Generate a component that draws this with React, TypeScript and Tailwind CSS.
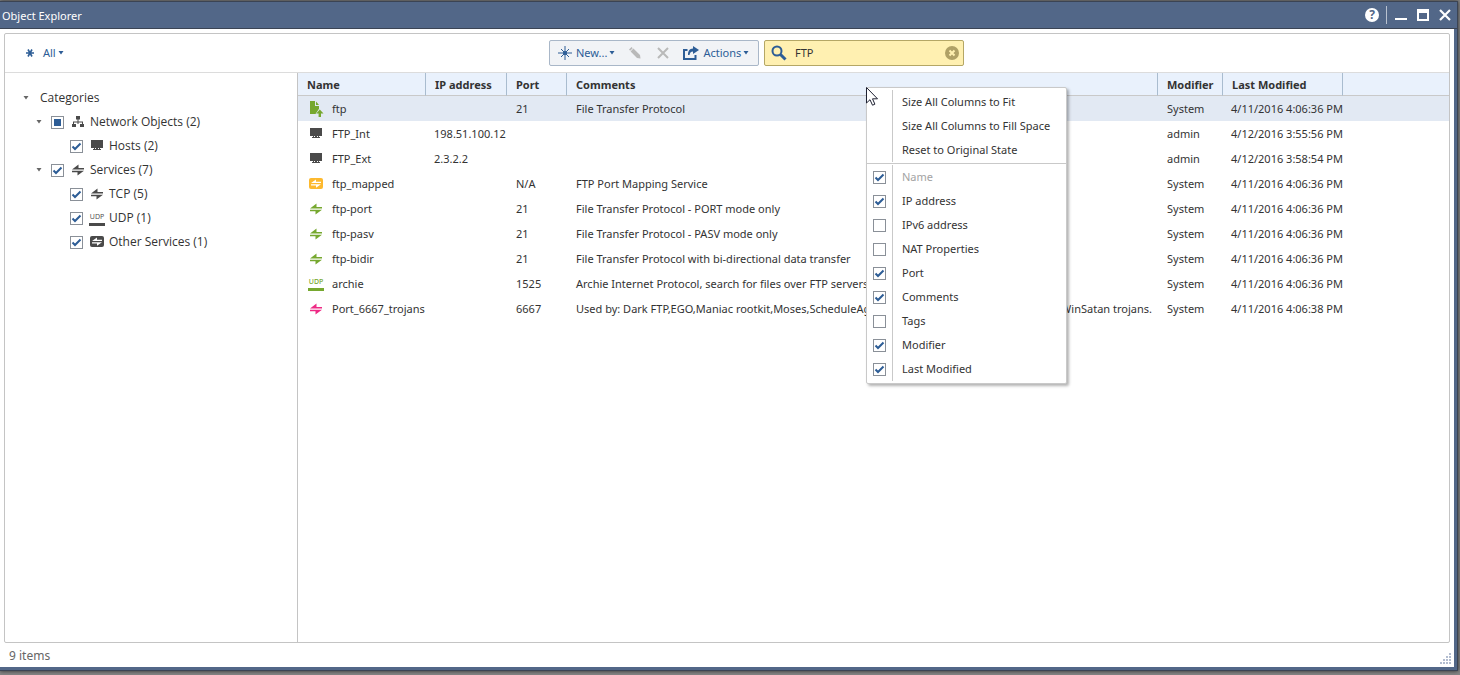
import type { ReactNode } from "react"

type IconProps = { className?: string }

const objects = [
  { icon: <FileUpIcon className="text-[#76a82f]" />, name: "ftp", ip: "", port: "21", comments: "File Transfer Protocol", modifier: "System", modified: "4/11/2016 4:06:36 PM", selected: true },
  { icon: <HostIcon className="text-[#4a4a4a]" />, name: "FTP_Int", ip: "198.51.100.12", port: "", comments: "", modifier: "admin", modified: "4/12/2016 3:55:56 PM" },
  { icon: <HostIcon className="text-[#4a4a4a]" />, name: "FTP_Ext", ip: "2.3.2.2", port: "", comments: "", modifier: "admin", modified: "4/12/2016 3:58:54 PM" },
  { icon: <OtherIcon className="text-[#fdb92e]" />, name: "ftp_mapped", ip: "", port: "N/A", comments: "FTP Port Mapping Service", modifier: "System", modified: "4/11/2016 4:06:36 PM" },
  { icon: <ArrowsIcon className="text-[#76a82f]" />, name: "ftp-port", ip: "", port: "21", comments: "File Transfer Protocol - PORT mode only", modifier: "System", modified: "4/11/2016 4:06:36 PM" },
  { icon: <ArrowsIcon className="text-[#76a82f]" />, name: "ftp-pasv", ip: "", port: "21", comments: "File Transfer Protocol - PASV mode only", modifier: "System", modified: "4/11/2016 4:06:36 PM" },
  { icon: <ArrowsIcon className="text-[#76a82f]" />, name: "ftp-bidir", ip: "", port: "21", comments: "File Transfer Protocol with bi-directional data transfer", modifier: "System", modified: "4/11/2016 4:06:36 PM" },
  { icon: <UdpIcon className="text-[#76a82f]" />, name: "archie", ip: "", port: "1525", comments: "Archie Internet Protocol, search for files over FTP servers", modifier: "System", modified: "4/11/2016 4:06:36 PM" },
  { icon: <ArrowsIcon className="text-[#ee2a85]" />, name: "Port_6667_trojans", ip: "", port: "6667", comments: "Used by: Dark FTP,EGO,Maniac rootkit,Moses,ScheduleAgent,SubSeven 2.1.4,The Thing,Trinity, WinSatan trojans.", modifier: "System", modified: "4/11/2016 4:06:38 PM" },
]

const tree = [
  { label: "Network Objects (2)", icon: <NetworkIcon />, state: "mixed", parent: true },
  { label: "Hosts (2)", icon: <HostIcon />, state: "on", parent: false },
  { label: "Services (7)", icon: <ArrowsIcon />, state: "on", parent: true },
  { label: "TCP (5)", icon: <ArrowsIcon />, state: "on", parent: false },
  { label: "UDP (1)", icon: <UdpIcon />, state: "on", parent: false },
  { label: "Other Services (1)", icon: <OtherIcon />, state: "on", parent: false },
]

const menuActions = ["Size All Columns to Fit", "Size All Columns to Fill Space", "Reset to Original State"]

const menuColumns = [
  { label: "Name", on: true, disabled: true },
  { label: "IP address", on: true },
  { label: "IPv6 address", on: false },
  { label: "NAT Properties", on: false },
  { label: "Port", on: true },
  { label: "Comments", on: true },
  { label: "Tags", on: false },
  { label: "Modifier", on: true },
  { label: "Last Modified", on: true },
]

function FileUpIcon({ className = "" }: IconProps) {
  return (
    <svg viewBox="0 0 16 16" className={`size-4 ${className}`} fill="currentColor">
      <path d="M2 0h5v5h4v8H2z" />
      <path d="M8 0.500L11 4H8z" />
      <path d="M11.500 7L16 12.500V16H9v-3H7.500z" fill="#e2e9f3" />
      <path d="M11.800 8.500L15.500 12.500h-2.500V16h-2.400v-3.500H8.200z" />
    </svg>
  )
}

function HostIcon({ className = "" }: IconProps) {
  return (
    <svg viewBox="0 0 16 16" className={`size-4 ${className}`} fill="currentColor">
      <path d="M2 2h12v8H2zM5 10h1v1h4v-1h1v1h1v1H4v-1h1zM7 10h2v1H7z" />
    </svg>
  )
}

function NetworkIcon({ className = "" }: IconProps) {
  return (
    <svg viewBox="0 0 16 16" className={`size-4 ${className}`} fill="currentColor">
      <path d="M6 2h4v3.500H8.500V7.500H13V10h1v3h-4v-3h2V8.500H8.500V10h-1V8.500H4V10h2v3H2v-3h1V7.500h4.500v-2H6z" />
    </svg>
  )
}

function ArrowsIcon({ className = "" }: IconProps) {
  return (
    <svg viewBox="0 0 16 16" className={`size-4 ${className}`} fill="currentColor">
      <path d="M2 7.500L8.500 2.500V6H14v1.500zM14 8.800L7.500 13.500V10.200H2V8.800z" />
    </svg>
  )
}

function OtherIcon({ className = "" }: IconProps) {
  return (
    <svg viewBox="0 0 16 16" className={`size-4 ${className}`} fill="currentColor">
      <rect x="1" y="2" width="14" height="11" rx="2" />
      <path fill="#fff" d="M3 7L8 3.500V5.700h5V7zM13 8.200L8 11.700V9.500H3V8.200z" />
    </svg>
  )
}

function UdpIcon({ className = "" }: IconProps) {
  return (
    <span className={`flex h-[15px] w-4 items-center justify-center border-b-[3px] border-current text-[7px] leading-[8px] font-medium ${className}`}>
      UDP
    </span>
  )
}

function Caret({ className = "" }: IconProps) {
  return (
    <svg viewBox="0 0 6 4" className={`h-1 w-1.5 ${className}`} fill="currentColor">
      <path d="M.5 0h5L3 3.500z" />
    </svg>
  )
}

function CheckBox({ state, label, disabled }: { state: string; label: string; disabled?: boolean }) {
  return (
    <span className="grid size-[13px] shrink-0">
      <input
        type="checkbox"
        aria-label={label}
        defaultChecked={state === "on"}
        disabled={disabled}
        className="peer col-start-1 row-start-1 size-[13px] appearance-none border border-[#8a9098] bg-white"
      />
      {state === "mixed" ? (
        <span className="pointer-events-none col-start-1 row-start-1 m-[3px] bg-[#2d5d96]" />
      ) : (
        <svg viewBox="0 0 13 13" className="pointer-events-none invisible col-start-1 row-start-1 size-[13px] peer-checked:visible">
          <path d="M2.500 6.500L5 9l5.500-5.500" fill="none" stroke="#2d5d96" strokeWidth="2" />
        </svg>
      )}
    </span>
  )
}

function TitleBar() {
  return (
    <header className="flex h-7 items-center border-t border-b border-[#3b4454] bg-[#526788] pr-1.5 pl-0.5 text-white">
      <h1 className="flex-1 pt-0.5 text-[11px] leading-4">Object Explorer</h1>
      <button aria-label="Help" className="flex size-4 items-center justify-center">
        <span className="flex size-3.5 items-center justify-center rounded-full bg-white text-[12px] leading-[14px] font-bold text-[#526788]">?</span>
      </button>
      <span className="ml-1.5 h-[18px] w-px bg-[#b9c2d0]" />
      <button aria-label="Minimize" className="ml-2">
        <svg viewBox="0 0 12 12" className="size-3" fill="currentColor"><path d="M0 9h12v2H0z" /></svg>
      </button>
      <button aria-label="Maximize" className="ml-2.5">
        <svg viewBox="0 0 12 12" className="size-3" fill="currentColor"><path fillRule="evenodd" d="M0 0h12v12H0zM2 4v6h8V4z" /></svg>
      </button>
      <button aria-label="Close" className="ml-2.5">
        <svg viewBox="0 0 12 12" className="size-3" stroke="currentColor" strokeWidth="2.200"><path d="M1 1l10 10M11 1L1 11" /></svg>
      </button>
    </header>
  )
}

function Toolbar() {
  return (
    <div className="flex h-[39px] items-center border-b border-[#dcdcdc] text-[11px] leading-4 text-[#2d5d96]">
      <div className="w-[544px] shrink-0 pl-5">
        <button className="flex items-center">
          <svg viewBox="0 0 10 10" className="size-2.5" stroke="currentColor" strokeWidth="1.600">
            <path d="M1 5h8M3 1.500l4 7M7 1.500l-4 7" />
          </svg>
          <span className="ml-2">All</span>
          <Caret className="ml-0.5" />
        </button>
      </div>
      <div className="flex h-[26px] w-[210px] shrink-0 items-center rounded-xs border border-[#a9b7c8] bg-[#f1f3f6] pl-2">
        <button className="flex items-center">
          <svg viewBox="0 0 14 14" className="size-3.5" stroke="currentColor">
            <path d="M0 7h14M7 0v14M3 3l8 8M11 3l-8 8" />
            <circle cx="7" cy="7" r="1.500" fill="currentColor" />
          </svg>
          <span className="ml-1">New...</span>
          <Caret className="ml-0.5" />
        </button>
        <button aria-label="Edit" disabled className="ml-3.5 text-[#b9b9b9]">
          <svg viewBox="0 0 12 12" className="size-3" fill="currentColor">
            <path d="M0 2.500L2.500 0l1.200 1.200L1.200 3.700zM1.600 4.400L4.400 1.600l6.600 6.400.5 3.500-3.500-.5z" />
          </svg>
        </button>
        <button aria-label="Delete" disabled className="ml-4 text-[#b9b9b9]">
          <svg viewBox="0 0 12 12" className="size-3" stroke="currentColor" strokeWidth="2"><path d="M1 1l10 10M11 1L1 11" /></svg>
        </button>
        <button className="ml-3.5 flex items-center">
          <svg viewBox="0 0 16 14" className="h-3.5 w-4">
            <path d="M4.500 4H1v9h11.500V9" fill="none" stroke="currentColor" strokeWidth="2" />
            <path d="M10 0l6 4-6 4V5.500C8 5.500 7 6.500 6.500 9H5c0-4 1.500-6.300 5-6.500z" fill="currentColor" />
          </svg>
          <span className="ml-1">Actions</span>
          <Caret className="ml-0.5" />
        </button>
      </div>
      <div className="ml-[5px] flex h-[26px] w-[200px] items-center rounded-xs border border-[#b5a765] bg-[#fff0b1] pr-1 pl-1.5">
        <svg viewBox="0 0 16 16" className="size-4 shrink-0" fill="none" stroke="currentColor">
          <circle cx="6" cy="6" r="4.500" strokeWidth="2" />
          <path d="M9.500 9.500l5 5" strokeWidth="3" />
        </svg>
        <input aria-label="Search" defaultValue="FTP" className="ml-2 min-w-0 flex-1 text-[11px] leading-4 text-[#333] outline-none" />
        <button aria-label="Clear">
          <svg viewBox="0 0 14 14" className="size-3.5">
            <circle cx="7" cy="7" r="7" fill="#b0a166" />
            <path d="M4.500 4.500l5 5M9.500 4.500l-5 5" stroke="#fff0b1" strokeWidth="2" />
          </svg>
        </button>
      </div>
    </div>
  )
}

function Sidebar() {
  return (
    <nav className="w-[293px] shrink-0 border-r border-[#c4c4c4] pt-[13px] font-['Open_Sans',sans-serif] text-[12px] leading-4 text-[#333]">
      <div className="flex h-6 items-center pl-[18px]">
        <Caret className="text-[#666]" />
        <span className="ml-[11px]">Categories</span>
      </div>
      {tree.map((node) => (
        <label key={node.label} className={node.parent ? "flex h-6 items-center pl-[31px]" : "flex h-6 items-center pl-[65px]"}>
          {node.parent && <Caret className="mr-[9px] text-[#666]" />}
          <CheckBox state={node.state} label={node.label} />
          <span className="ml-1.5 flex w-4 justify-center text-[#4a4a4a]">{node.icon}</span>
          <span className="ml-1">{node.label}</span>
        </label>
      ))}
    </nav>
  )
}

function HeadCell({ children }: { children?: ReactNode }) {
  return <th className="h-[23px] border-r border-b border-r-[#a9bccf] border-b-[#c9c9c9] p-0 pt-0.5 pl-[9px] text-left font-bold">{children}</th>
}

function ObjectTable() {
  return (
    <table className="w-full table-fixed border-separate border-spacing-0 text-[11px] leading-4 whitespace-nowrap text-[#333]">
      <colgroup>
        <col className="w-[128px]" />
        <col className="w-[81px]" />
        <col className="w-[60px]" />
        <col />
        <col className="w-[65px]" />
        <col className="w-[120px]" />
        <col className="w-[106px]" />
      </colgroup>
      <thead className="bg-[#e9f1fc]">
        <tr>
          <HeadCell>Name</HeadCell>
          <HeadCell>IP address</HeadCell>
          <HeadCell>Port</HeadCell>
          <HeadCell>Comments</HeadCell>
          <HeadCell>Modifier</HeadCell>
          <HeadCell>Last Modified</HeadCell>
          <th className="border-b border-[#c9c9c9]" />
        </tr>
      </thead>
      <tbody>
        {objects.map((item) => (
          <tr key={item.name} className={item.selected ? "h-[25px] bg-[#e2e9f3]" : "h-[25px]"}>
            <td className="p-0 pl-2.5">
              <span className="flex items-center gap-2">
                {item.icon}
                {item.name}
              </span>
            </td>
            <td className="p-0 pl-2">{item.ip}</td>
            <td className="p-0 pl-[9px]">{item.port}</td>
            <td className="overflow-hidden p-0 pl-[9px]">{item.comments}</td>
            <td className="p-0 pl-[9px]">{item.modifier}</td>
            <td className="p-0 pl-2">{item.modified}</td>
            <td className="p-0" />
          </tr>
        ))}
      </tbody>
    </table>
  )
}

function ColumnMenu() {
  return (
    <div className="absolute top-3.5 left-[568px] w-[201px] rounded-xs border border-[#c9c9c9] bg-white py-0.5 text-[11px] leading-4 text-[#333] shadow-[2px_2px_3px_rgba(0,0,0,0.3)]">
      {menuActions.map((action) => (
        <button key={action} className="flex h-6 w-full items-center">
          <span className="h-full w-[26px] border-r border-[#c9c9c9]" />
          <span className="ml-[9px]">{action}</span>
        </button>
      ))}
      <hr className="my-px border-[#c9c9c9]" />
      {menuColumns.map((column) => (
        <label key={column.label} className="flex h-6 items-center">
          <span className="flex h-full w-[26px] items-center border-r border-[#c9c9c9] pl-1.5">
            <CheckBox state={column.on ? "on" : "off"} label={column.label} disabled={column.disabled} />
          </span>
          <span className={column.disabled ? "ml-[9px] text-[#a3a3a3]" : "ml-[9px]"}>{column.label}</span>
        </label>
      ))}
      <svg viewBox="0 0 12 19" className="absolute -top-px -left-px h-[19px] w-3">
        <path d="M.5.500v15.500l3.500-3.300 2.500 5.500 2.400-1-2.400-5.400h5z" fill="#fff" stroke="#1f2233" />
      </svg>
    </div>
  )
}

function ResizeGrip() {
  return (
    <svg viewBox="0 0 12 12" className="mt-2 mr-0.5 size-3" fill="#b3bdd0">
      <path d="M9 0h2v2H9zM6 3h2v2H6zM9 3h2v2H9zM3 6h2v2H3zM6 6h2v2H6zM9 6h2v2H9zM0 9h2v2H0zM3 9h2v2H3zM6 9h2v2H6zM9 9h2v2H9z" />
    </svg>
  )
}

export default function App() {
  return (
    <div className="flex min-h-screen flex-col bg-[#858585] pt-px pr-0.5 pb-1 font-['Noto_Sans',sans-serif]">
      <div className="flex flex-1 flex-col border-r border-b border-[#3b4454] bg-[#526788] shadow-[0_0_4px_rgba(0,0,0,0.7)]">
        <TitleBar />
        <div className="mr-[3px] mb-[3px] flex flex-1 flex-col bg-white pt-1">
          <main className="mr-1 ml-1 flex flex-1 flex-col rounded-xs border border-[#c4c4c4]">
            <Toolbar />
            <div className="flex flex-1">
              <Sidebar />
              <section className="relative min-w-0 flex-1">
                <ObjectTable />
                <ColumnMenu />
              </section>
            </div>
          </main>
          <footer className="flex h-6 items-center justify-between pl-[9px] text-[12px] leading-4 text-[#666]">
            <span className="pt-0.5">9 items</span>
            <ResizeGrip />
          </footer>
        </div>
      </div>
    </div>
  )
}
